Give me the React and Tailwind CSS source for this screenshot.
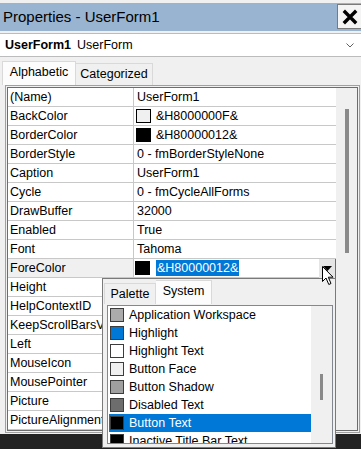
import React from "react";

const F = { fontFamily: '"Liberation Sans", Arial, sans-serif' };

const rows = [
  ["(Name)", { t: "UserForm1" }],
  ["BackColor", { s: "#f0f0f0", t: "&H8000000F&" }],
  ["BorderColor", { s: "#000000", t: "&H80000012&" }],
  ["BorderStyle", { t: "0 - fmBorderStyleNone" }],
  ["Caption", { t: "UserForm1" }],
  ["Cycle", { t: "0 - fmCycleAllForms" }],
  ["DrawBuffer", { t: "32000" }],
  ["Enabled", { t: "True" }],
  ["Font", { t: "Tahoma" }],
  ["ForeColor", { fore: true }],
  ["Height", { t: "" }],
  ["HelpContextID", { t: "" }],
  ["KeepScrollBarsVisible", { t: "" }],
  ["Left", { t: "" }],
  ["MouseIcon", { t: "" }],
  ["MousePointer", { t: "" }],
  ["Picture", { t: "" }],
  ["PictureAlignment", { t: "" }],
];

const sysColors = [
  ["Application Workspace", "#ababab"],
  ["Highlight", "#0078d7"],
  ["Highlight Text", "#ffffff"],
  ["Button Face", "#f0f0f0"],
  ["Button Shadow", "#a0a0a0"],
  ["Disabled Text", "#6d6d6d"],
  ["Button Text", "#000000", true],
  ["Inactive Title Bar Text", "#000000"],
];

function ValueCell({ v }) {
  if (v.fore) {
    return (
      <div className="flex h-full w-full bg-white">
        <div className="flex flex-1 items-center pl-[1px]">
          <div className="h-[14px] w-[15px] bg-black" />
          <span className="ml-[6px] bg-[#0078d7] px-[1px] leading-[16px] text-white">&H80000012&</span>
        </div>
        <div className="flex h-[19px] w-[17px] items-center justify-center border-r border-[#6d6d6d] bg-[#e5e5e5]">
          <svg width="9" height="6" viewBox="0 0 9 6">
            <path d="M0 0 H9 L4.5 5 Z" fill="#000" />
          </svg>
        </div>
      </div>
    );
  }
  return (
    <div className="flex h-full items-center pl-[2px]">
      {v.s && <div className="mr-[5px] h-[14px] w-[15px] border border-black" style={{ background: v.s }} />}
      <span className={v.s ? "" : "pl-[1px]"}>{v.t}</span>
    </div>
  );
}

export default function App() {
  return (
    <div className="relative h-[449px] w-[361px] overflow-hidden bg-[#222222] text-[12.5px] text-black" style={F}>
      <div className="flex h-[434px] flex-col bg-[#f0f0f0]">
        {/* title bar */}
        <div className="mt-[3px] flex h-[28px] items-center justify-between bg-[#99b4d1]">
          <span className="pl-[3px] text-[15px]">Properties - UserForm1</span>
          <div className="mb-[2px] mt-[1px] flex h-[25px] w-[24px] items-center justify-center border border-[#7a7a7a] border-r-0 bg-[#f4f4f4]">
            <svg width="16" height="16" viewBox="0 0 16 16">
              <path d="M1.8 1.8 L14.2 14.2 M14.2 1.8 L1.8 14.2" stroke="#000" strokeWidth="3.4" />
            </svg>
          </div>
        </div>
        {/* combo */}
        <div className="mt-[2px] flex h-[24px] items-center justify-between border-y border-[#bcbcbc] bg-white">
          <div className="pl-[5px]">
            <span className="font-bold">UserForm1</span>
            <span className="ml-[6px]">UserForm</span>
          </div>
          <svg className="mr-[7px]" width="8" height="5" viewBox="0 0 8 5">
            <path d="M0.5 0.5 L4 4 L7.5 0.5" stroke="#606060" fill="none" strokeWidth="1" />
          </svg>
        </div>
        {/* tabs */}
        <div className="mt-[4px] flex h-[24px] items-end pl-[2px]">
          <div className="flex h-[24px] w-[74px] items-center justify-center border border-b-0 border-[#d9d9d9] bg-[#fcfcfc] pb-[2px]">
            Alphabetic
          </div>
          <div className="flex h-[22px] w-[77px] items-center justify-center border border-b-0 border-l-0 border-[#d9d9d9] bg-[#f0f0f0]">
            Categorized
          </div>
        </div>
        {/* grid frame */}
        <div className="ml-[5px] mr-[1px] h-[348px] border border-[#a0a0a0] p-[1px]">
          <div className="flex h-full border border-[#6d6d6d]">
            <div className="w-[328px] bg-white">
              {rows.map(([name, v]) => (
                <div key={name} className="flex h-[19px] border-b border-[#c8c8c8]">
                  <div
                    className={
                      "w-[126px] overflow-hidden whitespace-nowrap border-r border-[#c8c8c8] pl-[2px] leading-[18px] " +
                      (v.fore ? "bg-[#f0f0f0]" : "")
                    }
                  >
                    {name}
                  </div>
                  <div className="w-[202px] whitespace-nowrap">
                    <ValueCell v={v} />
                  </div>
                </div>
              ))}
            </div>
            <div className="flex flex-1 justify-center bg-[#f0f0f0] pl-[1px]">
              <div className="mt-[21px] h-[144px] w-[4px] bg-[#8a8a8a]" />
            </div>
          </div>
        </div>
      </div>

      {/* color dropdown popup */}
      <div className="absolute left-[102px] top-[278px] h-[170px] w-[234px] border border-[#7a7a7a] bg-[#f0f0f0]">
        <div className="flex h-[25px] items-end pl-[1px]">
          <div className="flex h-[21px] w-[52px] items-center justify-center border border-b-0 border-[#d9d9d9] bg-[#f0f0f0]">
            Palette
          </div>
          <div className="flex h-[24px] w-[56px] items-center justify-center border border-b-0 border-l-0 border-[#d9d9d9] bg-[#fcfcfc] pb-[3px]">
            System
          </div>
        </div>
        <div className="ml-[4px] mr-[2px] mt-[1px] flex h-[139px] overflow-hidden border border-[#828790] bg-white">
          <div className="w-[203px] pl-[1px]">
            {sysColors.map(([n, c, sel]) => (
              <div
                key={n}
                className={"flex h-[18px] shrink-0 items-center whitespace-nowrap " + (sel ? "bg-[#0078d7] text-white" : "")}
              >
                <div className="ml-[1px] h-[14px] w-[14px] border border-[#3c3c3c]" style={{ background: c }} />
                <span className="ml-[5px]">{n}</span>
              </div>
            ))}
          </div>
          <div className="flex flex-1 justify-center bg-[#f0f0f0]">
            <div className="mt-[68px] h-[26px] w-[3px] bg-[#8a8a8a]" />
          </div>
        </div>
      </div>

      {/* mouse cursor */}
      <svg className="absolute left-[322px] top-[266px]" width="14" height="21" viewBox="0 0 14 21">
        <path
          d="M0.5 0.5 L0.5 15.5 L4 12 L6.8 18.5 L9 17.5 L6.3 11.2 L11 11.2 Z"
          fill="#fff"
          stroke="#000"
          strokeWidth="1"
          strokeLinejoin="miter"
        />
      </svg>
    </div>
  );
}
